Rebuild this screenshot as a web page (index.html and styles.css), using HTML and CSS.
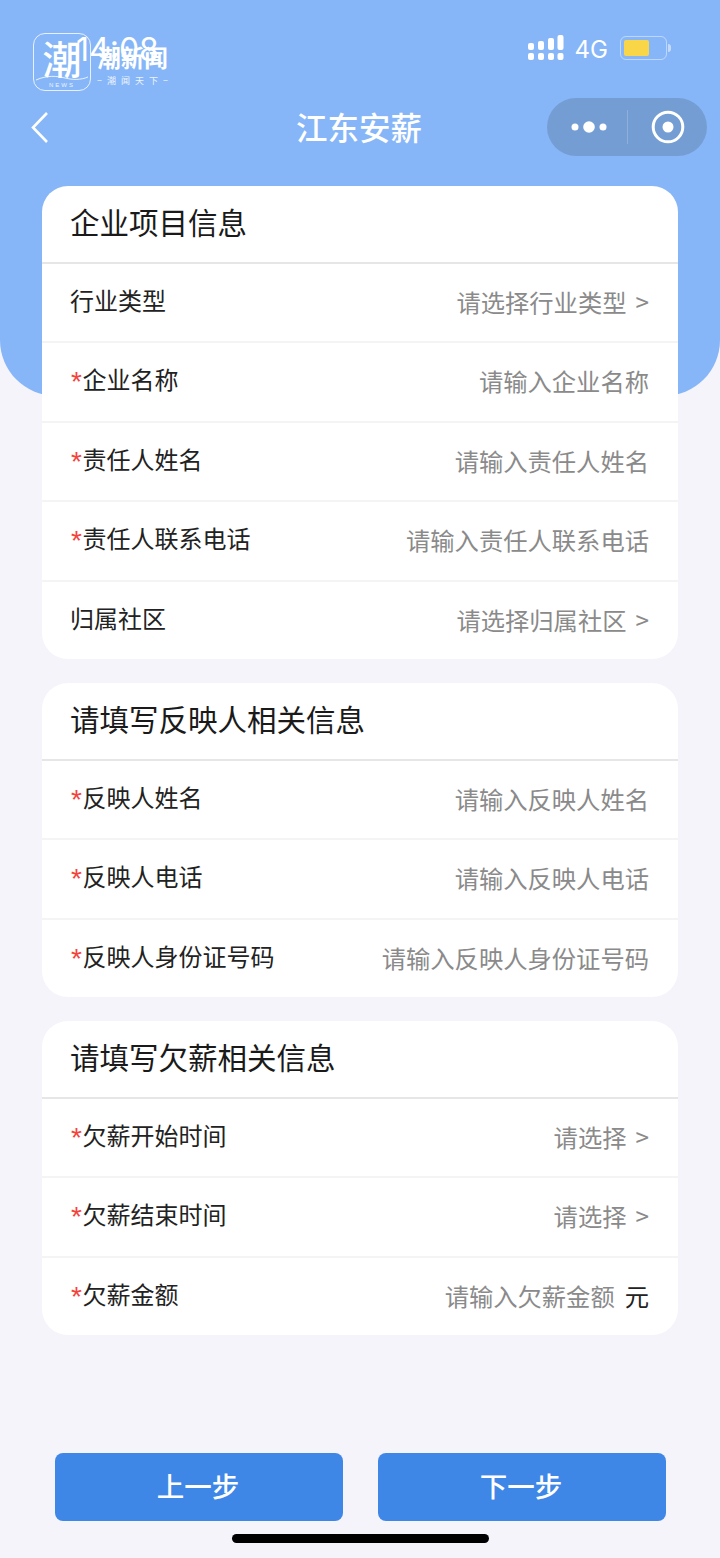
FILE: index.html
```html
<!DOCTYPE html>
<html lang="zh-CN">
<head>
<meta charset="utf-8">
<title>江东安薪</title>
<link rel="stylesheet" href="styles.css">
</head>
<body>
<div class="page">
  <div class="hero-bg"></div>

  <div class="watermark">
    <div class="wm-box">
      <span class="wm-char">潮</span>
      <svg class="wm-wave" width="54" height="8" viewBox="0 0 54 8"><path d="M1 6C12 1 22 2 30 4S46 6 53 3" fill="none" stroke="#fff" stroke-width="1" opacity=".8"/></svg>
      <span class="wm-news">NEWS</span>
    </div>
    <div class="wm-text">
      <span class="wm-name">潮新闻</span>
      <span class="wm-slogan">− 潮 闻 天 下 −</span>
    </div>
  </div>

  <header class="status">
    <span class="time">14:08</span>
    <div class="status-right">
      <svg class="signal" width="36" height="26" viewBox="0 0 36 26" fill="#fff">
        <rect x="0" y="8" width="6" height="7" rx="2"/><rect x="10" y="6" width="6" height="9" rx="2"/><rect x="20" y="3" width="6" height="12" rx="2"/><rect x="29.500" y="0" width="6" height="15" rx="2"/>
        <rect x="0" y="18" width="6" height="7" rx="2"/><rect x="10" y="18" width="6" height="7" rx="2"/><rect x="20" y="18" width="6" height="7" rx="2"/><rect x="29.500" y="18" width="6" height="7" rx="2"/>
      </svg>
      <span class="net">4G</span>
      <div class="battery"><div class="battery-fill"></div></div>
      <div class="battery-tip"></div>
    </div>
  </header>

  <nav class="nav">
    <svg class="back" width="20" height="34" viewBox="0 0 20 34"><path d="M17 2L3 16.500L17 31" fill="none" stroke="#fff" stroke-width="2.600"/></svg>
    <h1 class="title">江东安薪</h1>
    <div class="capsule">
      <svg width="36" height="16" viewBox="0 0 36 16" fill="#fff"><circle cx="4" cy="8" r="3.500"/><circle cx="18" cy="8" r="5.800"/><circle cx="32" cy="8" r="3.500"/></svg>
      <span class="capsule-line"></span>
      <svg width="34" height="34" viewBox="0 0 34 34"><circle cx="17" cy="17" r="14.800" fill="none" stroke="#fff" stroke-width="3"/><circle cx="17" cy="17" r="5.500" fill="#fff"/></svg>
    </div>
  </nav>

  <main class="cards">
    <section class="card">
      <h2 class="card-title">企业项目信息</h2>
      <div class="row"><span class="label">行业类型</span><span class="value">请选择行业类型<span class="arrow">&gt;</span></span></div>
      <div class="row"><span class="label"><i>*</i>企业名称</span><span class="value">请输入企业名称</span></div>
      <div class="row"><span class="label"><i>*</i>责任人姓名</span><span class="value">请输入责任人姓名</span></div>
      <div class="row"><span class="label"><i>*</i>责任人联系电话</span><span class="value">请输入责任人联系电话</span></div>
      <div class="row"><span class="label">归属社区</span><span class="value">请选择归属社区<span class="arrow">&gt;</span></span></div>
    </section>
    <section class="card">
      <h2 class="card-title">请填写反映人相关信息</h2>
      <div class="row"><span class="label"><i>*</i>反映人姓名</span><span class="value">请输入反映人姓名</span></div>
      <div class="row"><span class="label"><i>*</i>反映人电话</span><span class="value">请输入反映人电话</span></div>
      <div class="row"><span class="label"><i>*</i>反映人身份证号码</span><span class="value">请输入反映人身份证号码</span></div>
    </section>
    <section class="card">
      <h2 class="card-title">请填写欠薪相关信息</h2>
      <div class="row"><span class="label"><i>*</i>欠薪开始时间</span><span class="value">请选择<span class="arrow">&gt;</span></span></div>
      <div class="row"><span class="label"><i>*</i>欠薪结束时间</span><span class="value">请选择<span class="arrow">&gt;</span></span></div>
      <div class="row"><span class="label"><i>*</i>欠薪金额</span><span class="value">请输入欠薪金额<b class="unit">元</b></span></div>
    </section>
  </main>

  <footer class="actions">
    <button class="btn">上一步</button>
    <button class="btn">下一步</button>
  </footer>
  <div class="home-bar"></div>
</div>
</body>
</html>
```

FILE: styles.css
```css
* { box-sizing: border-box; margin: 0; padding: 0; }
html, body { width: 720px; height: 1558px; overflow: hidden; }
body {
  background: #f6f4fb;
  font-family: "Noto Sans CJK SC", "Noto Sans", sans-serif;
  color: #222;
}
.page { position: relative; width: 720px; height: 1558px; display: flex; flex-direction: column; }
.hero-bg {
  position: absolute; left: 0; top: 0; width: 720px; height: 396px;
  background: #86b6f7;
  border-radius: 0 0 56px 56px;
}
.watermark {
  position: absolute; left: 33px; top: 33px;
  display: flex; align-items: flex-start; gap: 6px; color: #fff;
}
.wm-box {
  position: relative; width: 58px; height: 58px;
  border: 1.500px solid rgba(255,255,255,.8); border-radius: 12px;
}
.wm-char {
  position: absolute; left: 6px; top: 1px; width: 44px; text-align: center;
  font-size: 39px; line-height: 44px; font-weight: 500;
}
.wm-wave { position: absolute; left: 1px; top: 40px; }
.wm-news {
  position: absolute; left: 0; right: 0; top: 47px; text-align: center;
  font: 400 6px/8px "Liberation Sans", sans-serif; letter-spacing: 2px; opacity: .85;
}
.wm-text { display: flex; flex-direction: column; align-items: center; padding-top: 11px; }
.wm-name { font-size: 23.500px; line-height: 26px; font-weight: 700; }
.wm-slogan { font-size: 9px; line-height: 14px; margin-top: 4px; word-spacing: 3px; opacity: .85; white-space: nowrap; }

.status {
  position: relative; height: 96px; display: flex; justify-content: space-between;
  padding: 29px 48px 0 76px; color: #fff;
}
.time { font: 400 32px/36px "Inter", sans-serif; margin-top: 3px; }
.status-right { display: flex; align-items: flex-start; padding-top: 6px; margin-right: 1px; }
.signal { display: block; }
.net { font: 400 24px/26px "Inter", "Liberation Sans", sans-serif; margin-left: 11px; margin-top: 2px; }
.battery {
  width: 47px; height: 24px; margin-left: 12px; margin-top: 1px; padding: 3px;
  border: 1.500px solid rgba(255,255,255,.45); border-radius: 6px;
}
.battery-fill { width: 25px; height: 100%; background: #f8d648; border-radius: 2px; }
.battery-tip { width: 3px; height: 8px; margin: 9px 0 0 1px; background: rgba(255,255,255,.5); border-radius: 0 3px 3px 0; }

.nav {
  position: relative; height: 90px; display: flex; align-items: center; justify-content: center;
  padding: 0 2px 30px 0;
}
.back { position: absolute; left: 30px; top: 15px; }
.title { font-size: 31.500px; line-height: 62px; font-weight: 500; color: #fff; }
.capsule {
  position: absolute; left: 547px; top: 2px; width: 160px; height: 58px;
  display: flex; align-items: center;
  padding-left: 24px;
  background: #749dd4; border-radius: 29px;
}
.capsule-line { width: 1px; height: 34px; margin: 0 22.500px 0 20px; background: rgba(255,255,255,.2); }

.cards { position: relative; display: flex; flex-direction: column; gap: 24px; padding: 0 42px; }
.card { background: #fff; border-radius: 26px; overflow: hidden; }
.card-title {
  height: 77.500px; padding: 0 28px; font-size: 29.500px; line-height: 70px; font-weight: 400; color: #1a1a1a;
  border-bottom: 2px solid #e6e6e6;
}
.row {
  height: 79.500px; padding: 0 29px 1px 28px; display: flex; align-items: center; justify-content: space-between;
  border-bottom: 2px solid #f4f4f4;
}
.row:last-child { height: 77.500px; border-bottom: 0; }
.label { font-size: 24px; line-height: 34px; color: #222; margin-top: -4px; }
.label i {
  display: inline-block; width: 12.500px; padding-left: 1px; font: 400 28px/20px "Liberation Sans", sans-serif;
  color: #f4433c; vertical-align: -2px;
}
.value { font-size: 24.300px; line-height: 34px; color: #8a8a8a; white-space: nowrap; }
.arrow { margin-left: 9px; }
.unit { font-weight: 400; color: #222; margin-left: 10px; }

.actions { position: absolute; left: 55px; top: 1453px; width: 611px; display: flex; justify-content: space-between; }
.btn {
  width: 288px; height: 68px; border: 0; border-radius: 8px;
  background: #3f87e6; color: #fff;
  font-family: inherit; font-size: 27.500px; font-weight: 500; line-height: 64px; padding: 0 2px 4px 0;
}
.home-bar { position: absolute; left: 232px; top: 1534px; width: 257px; height: 9px; background: #000; border-radius: 5px; }
```
